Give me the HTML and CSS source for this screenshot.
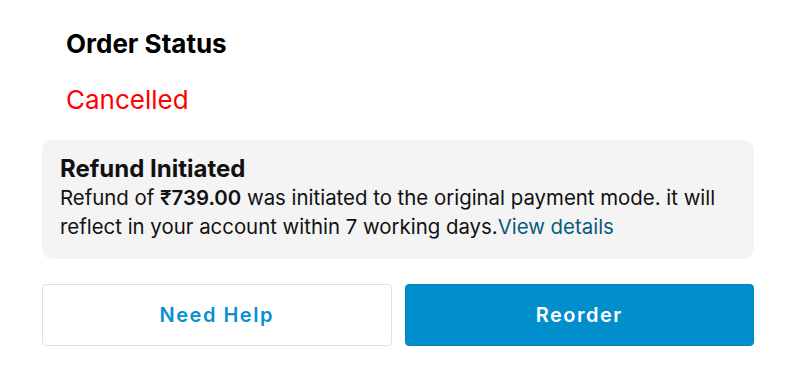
FILE: index.html
```html
<!DOCTYPE html>
<html>
<head>
<meta charset="utf-8">
<link rel="stylesheet" href="styles.css">
</head>
<body>
<div class="page">
  <div class="status">
    <h2 class="status-title">Order Status</h2>
    <div class="status-value">Cancelled</div>
  </div>
  <div class="refund">
    <div class="refund-title">Refund Initiated</div>
    <p class="refund-text">Refund of <b>₹739.00</b> was initiated to the original payment mode. it will reflect in your account within 7 working days.<a class="link" href="#">View details</a></p>
  </div>
  <div class="actions">
    <button class="btn btn-outline">Need Help</button>
    <button class="btn btn-primary">Reorder</button>
  </div>
</div>
</body>
</html>
```
FILE: styles.css
```css
* { box-sizing: border-box; }
html, body { margin: 0; padding: 0; background: #fff; }
body { font-family: Inter, "Noto Sans", sans-serif; color: #111; }
.page { width: 712px; margin-left: 42px; padding-top: 28px; }
.status { padding-left: 24px; }
.status-title { margin: 0; font-size: 26px; font-weight: 700; line-height: 32px; color: #000; }
.status-value { margin-top: 24px; font-size: 26px; line-height: 32px; color: #ff0000; }
.refund { margin-top: 24px; background: #f4f4f4; border-radius: 10px; padding: 16px 18px 18px 18px; }
.refund-title { font-size: 24px; font-weight: 700; line-height: 26px; color: #111; }
.refund-text { margin: 1px 0 0; font-size: 20.4px; line-height: 29px; color: #111; }
.refund-text b { font-weight: 600; }
.link { color: #0a5a7e; text-decoration: none; }
.actions { display: flex; gap: 13px; margin-top: 25px; }
.btn { flex: 1; height: 62px; border-radius: 4px; font-family: Inter, "Noto Sans", sans-serif; font-size: 20px; font-weight: 600; letter-spacing: 1.5px; cursor: pointer; }
.btn-outline { background: #fff; border: 1px solid #e0e0e0; color: #0a8fd0; }
.btn-primary { background: #008ecc; border: 1px solid #0082bc; color: #fff; }
```
